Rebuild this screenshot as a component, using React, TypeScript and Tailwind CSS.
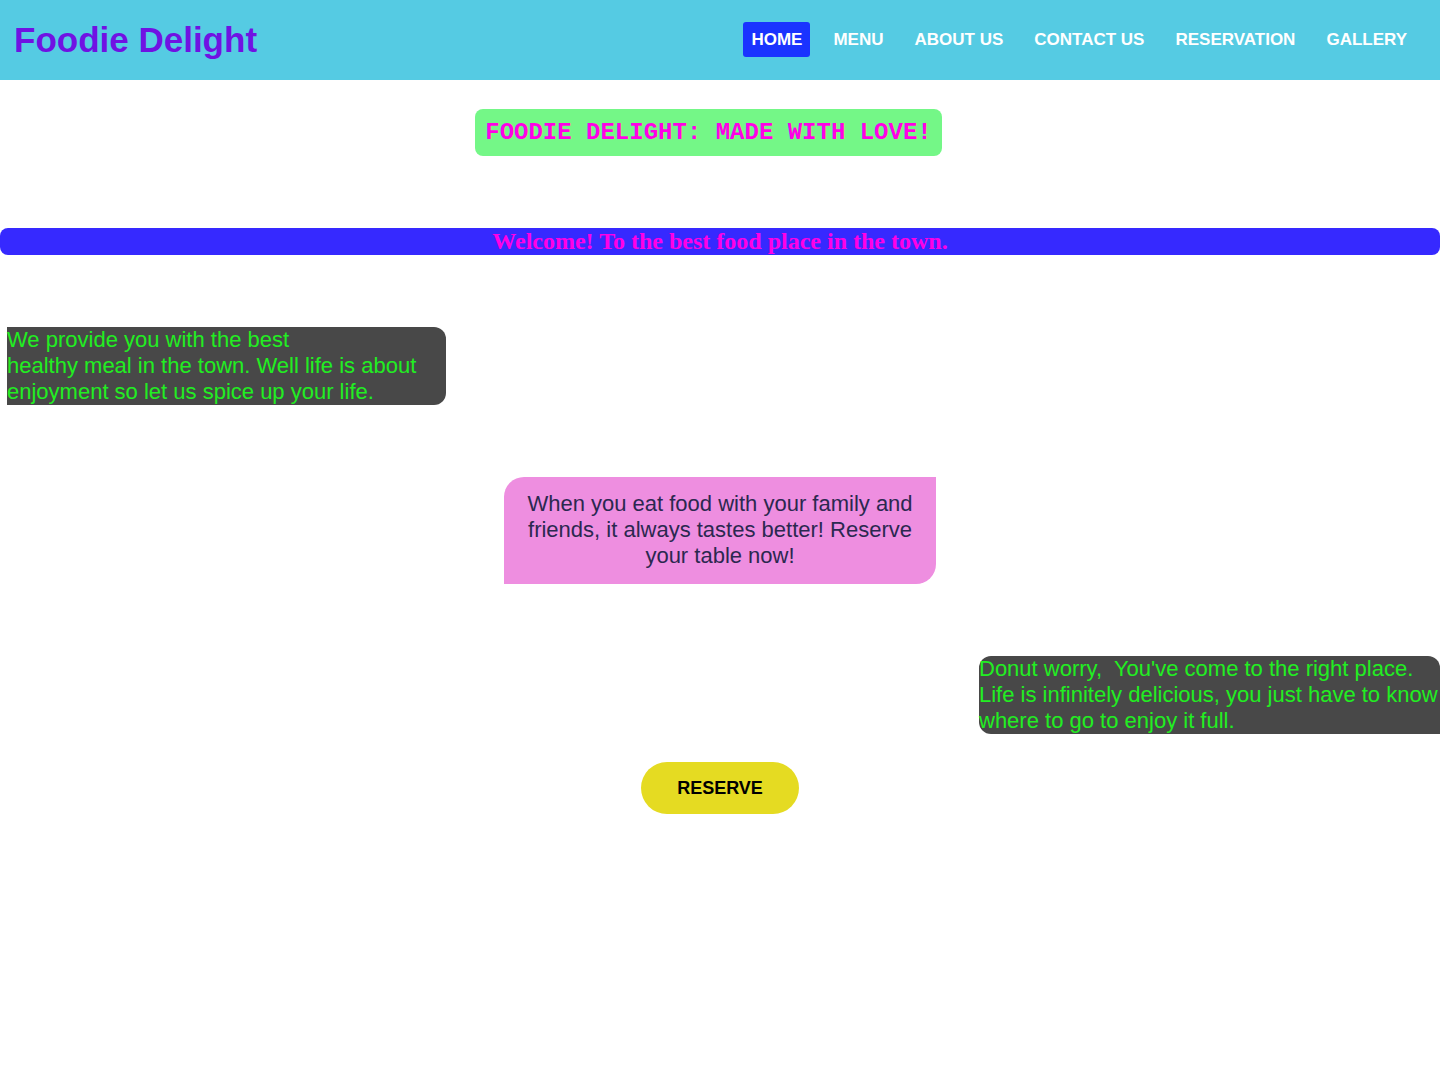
import React from "react";

const navLinks = ["HOME", "MENU", "ABOUT US", "CONTACT US", "RESERVATION", "GALLERY"];

const Header = () => {
  return (
    <header className="flex h-[80px] items-center justify-between bg-[#55cbe3] pl-[14px] pr-[25px]">
      <h1 className="text-[35px] font-bold text-[#7012e3]">Foodie Delight</h1>
      <nav className="mb-[2px] flex items-center gap-[15px]">
        {navLinks.map((link) => (
          <a
            key={link}
            href="#"
            className={
              link === "HOME"
                ? "rounded-[3px] bg-[#1a33ff] px-[8px] py-[7px] text-[17px] font-bold leading-[21px] text-white"
                : "px-[8px] py-[7px] text-[17px] font-bold leading-[21px] text-white"
            }
          >
            {link}
          </a>
        ))}
      </nav>
    </header>
  );
};

const App = () => {
  return (
    <div className="min-h-screen bg-white font-['Liberation_Sans',Arial,sans-serif]">
      <Header />

      <div className="flex justify-center pt-[29px] pr-[23px]">
        <h2 className="rounded-lg bg-[#74f787] px-[10px] py-[10px] font-['Liberation_Mono',monospace] text-[24px] font-bold leading-[27px] text-[#ff00e6]">
          FOODIE DELIGHT: MADE WITH LOVE!
        </h2>
      </div>

      {/* welcome strip */}
      <div className="mt-[72px] rounded-lg bg-[#3629ff] text-center font-['Liberation_Serif',serif] text-[24px] font-bold leading-[27px] text-[#ff00e6]">
        Welcome! To the best food place in the town.
      </div>

      <div className="mt-[72px] pl-[7px]">
        <p className="w-[439px] rounded-r-xl bg-[#484848] text-[22px] leading-[26px] text-[#22ee22]">
          We provide you with the best
          <br />
          healthy meal in the town. Well life is about enjoyment so let us spice up your life.
        </p>
      </div>

      <div className="mt-[72px] flex justify-center">
        <p className="w-[432px] rounded-tl-[20px] rounded-br-[20px] bg-[#ee8ee0] px-[16px] pt-[14px] pb-[15px] text-center text-[22px] leading-[26px] text-[#2b2850]">
          When you eat food with your family and friends, it always tastes better! Reserve your table now!
        </p>
      </div>

      <div className="mt-[72px] flex justify-end">
        <p className="w-[461px] rounded-l-xl rounded-tr-xl bg-[#484848] text-[22px] leading-[26px] text-[#22ee22]">
          Donut worry,&nbsp; You've come to the right place. Life is infinitely delicious, you just have to know where to go to enjoy it full.
        </p>
      </div>

      <div className="mt-[28px] flex justify-center">
        <button className="h-[52px] w-[158px] rounded-full bg-[#e5db22] text-[18px] font-bold text-black">
          RESERVE
        </button>
      </div>
    </div>
  );
};

export default App;
